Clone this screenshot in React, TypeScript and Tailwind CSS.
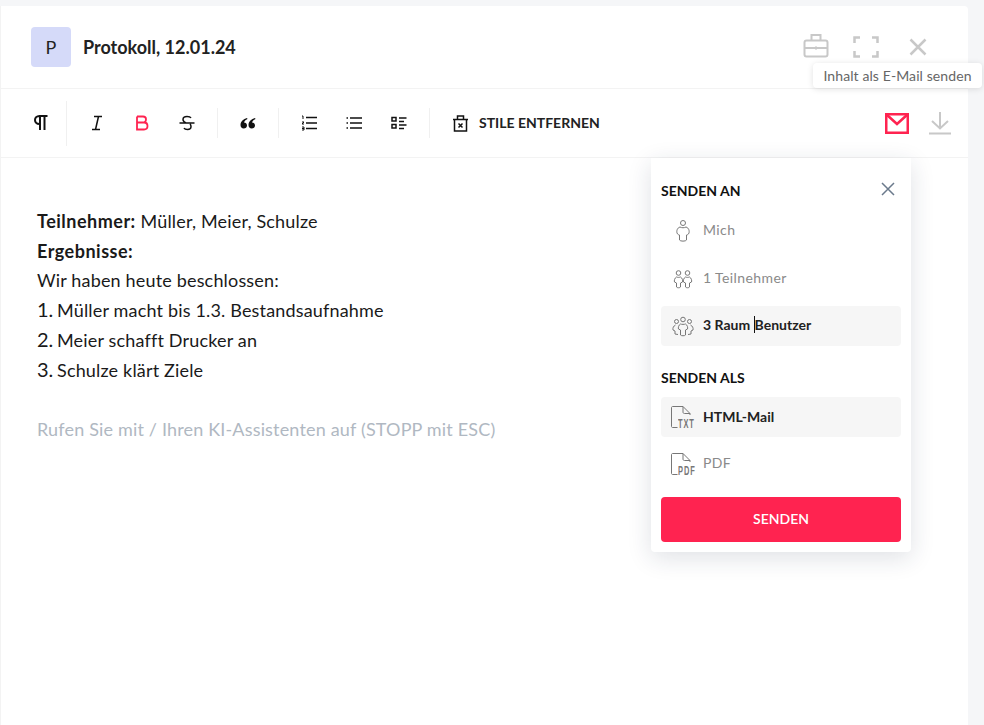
import { FC, ReactNode } from 'react';

const font = { fontFamily: 'Lato, "Open Sans", sans-serif' };

const Svg: FC<{ size?: number; className?: string; children: ReactNode; w?: number; h?: number }> = ({
  size = 20,
  w,
  h,
  className,
  children,
}) => (
  <svg
    width={w ?? size}
    height={h ?? size}
    viewBox={`0 0 ${w ?? size} ${h ?? size}`}
    fill="none"
    stroke="currentColor"
    className={className}
  >
    {children}
  </svg>
);

const Divider: FC<{ tall?: boolean; className?: string }> = ({ tall, className = '' }) => (
  <div className={`${tall ? 'h-[45px]' : 'h-[30px]'} w-px bg-[#f0f0f0] ${className}`} />
);

const ToolBtn: FC<{ children: ReactNode }> = ({ children }) => (
  <div className="flex w-[45px] items-center justify-center">{children}</div>
);

const PersonIcon: FC = () => (
  <Svg w={18} h={24} className="text-[#777]">
    <circle cx="9" cy="4" r="2.5" />
    <path d="M6 8 C3 9 2.500 12 3 14 C3.500 15.500 5 16 5.500 16 L5.500 21 C6 22.500 12 22.500 12.500 21 L12.500 16 C13 16 14.500 15.500 15 14 C15.500 12 15 9 12 8 C10 9 8 9 6 8 Z" />
  </Svg>
);

const TwoPeopleIcon: FC = () => (
  <Svg w={20} h={20} className="text-[#777]">
    <circle cx="5.500" cy="4" r="2.300" />
    <circle cx="14.500" cy="4" r="2.300" />
    <path d="M3.500 8 C1.500 9 1 12 1.500 13 L3.500 14 L3.500 18 C4 19 7 19 7.500 18 L7.500 14 L9.500 13 C10 12 9.500 9 7.500 8 C6.500 8.500 4.500 8.500 3.500 8 Z" />
    <path d="M12.500 8 C10.500 9 10 12 10.500 13 L12.500 14 L12.500 18 C13 19 16 19 16.500 18 L16.500 14 L18.500 13 C19 12 18.500 9 16.500 8 C15.500 8.500 13.500 8.500 12.500 8 Z" />
  </Svg>
);

const GroupIcon: FC = () => (
  <Svg w={22} h={21} className="text-[#777]">
    <circle cx="11" cy="3.500" r="2.300" />
    <circle cx="4.500" cy="5.500" r="2" />
    <circle cx="17.500" cy="5.500" r="2" />
    <path d="M8.500 8 C6.500 9 6 12 6.500 13 L8.500 14 L8.500 19 C9 20 13 20 13.500 19 L13.500 14 L15.500 13 C16 12 15.500 9 13.500 8 C12.500 8.500 9.500 8.500 8.500 8 Z" />
    <path d="M3.500 9 C1.500 10 0.500 12 1 14 L3 15 L3 18 L6 18.500" />
    <path d="M18.500 9 C20.500 10 21.500 12 21 14 L19 15 L19 18 L16 18.500" />
  </Svg>
);

const FileIcon: FC<{ label: string }> = ({ label }) => (
  <div className="relative h-[23px] w-[24px] text-[#777]">
    <Svg w={20} h={23}>
      <path d="M6.500 21.500 H1.500 C1 21.500 0.500 21 0.500 20.500 V1.500 C0.500 1 1 0.500 1.500 0.500 H12 L19 7.500 V9" />
      <path d="M12 0.500 V6 C12 7 12.500 7.500 13.500 7.500 H19" />
    </Svg>
    <span className="absolute bottom-[-1px] left-[7px] origin-left scale-x-[0.62] text-[12px] leading-[12px] font-bold tracking-[1.5px] text-[#777] [font-family:'Liberation_Sans',sans-serif]">
      {label}
    </span>
  </div>
);

const Option: FC<{ icon: ReactNode; label: string; active?: boolean; caret?: boolean }> = ({
  icon,
  label,
  active,
  caret,
}) => (
  <div className={`flex h-10 items-center rounded ${active ? 'bg-[#f6f6f6]' : ''}`}>
    <div className="flex w-[42px] shrink-0 justify-center pl-[2px]">{icon}</div>
    {caret ? (
      <span className="pb-[3px] text-[14px] font-bold text-[#222]">
        3 Raum <span className="border-l border-[#111]">Benutzer</span>
      </span>
    ) : (
      <span
        className={
          active
            ? 'pb-[2px] text-[14px] font-bold text-[#222]'
            : 'pb-[3px] text-[14px] tracking-[0.4px] text-[#8a8a8a]'
        }
      >
        {label}
      </span>
    )}
  </div>
);

const ListNumber: FC<{ n: number }> = ({ n }) => (
  <span className="inline-block w-[20px] text-[20px] leading-none tracking-normal">{n}.</span>
);

const App: FC = () => {
  return (
    <div className="h-[725px] w-[984px] overflow-hidden bg-[#f5f6f8] pt-[6px]" style={font}>
      <div className="relative h-[719px] w-[968px] rounded-tr border-l border-[#f3f3f3] bg-white text-[#1a1a1a]">
        <header className="flex h-[83px] items-center justify-between border-b border-[#f3f3f3] pr-[41px] pl-[30px]">
          <div className="flex items-center gap-3">
            <div className="flex h-10 w-10 items-center justify-center rounded bg-[#d5daf9] text-lg text-[#222]">P</div>
            <h1 className="text-[18px] font-bold text-[#222]">Protokoll, 12.01.24</h1>
          </div>
          <div className="flex items-center text-[#c8c8c8]">
            <Svg w={26} h={25} className="-mt-[3px] [stroke-width:2]">
              <rect x="1.500" y="7.500" width="23" height="16" rx="2" />
              <path d="M8.500 7 V2 H17.500 V7 M1.500 15 H24.500 M13 13.500 V16.500" />
            </Svg>
            <Svg w={26} h={22} className="ml-[24px] [stroke-width:2.500]">
              <path d="M1.500 7 V1.500 H7 M19 1.500 H24.500 V7 M24.500 15 V20.500 H19 M7 20.500 H1.500 V15" />
            </Svg>
            <Svg w={18} h={18} className="ml-[30px] [stroke-width:2.500]">
              <path d="M1.500 1.500 L16.500 16.500 M16.500 1.500 L1.500 16.500" />
            </Svg>
          </div>
        </header>

        <div className="absolute top-[57px] left-[812px] z-20 flex h-[25px] w-[169px] items-center justify-center rounded bg-white text-[14px] tracking-[0.1px] text-[#666] shadow-[0_1px_6px_rgba(0,0,0,0.12)]">
          Inhalt als E-Mail senden
        </div>

        <div className="flex h-[69px] items-center border-b border-[#f3f3f3] pr-[17px] pl-[32px]">
          <div className="flex w-[33px] justify-start">
            <Svg w={16} h={18} className="text-[#111] [stroke-width:2]">
              <path d="M7 16 V2 M11.500 16 V2 M14.500 2 H6.500 C3.500 2 2 4 2 6 C2 8 3.500 10 6.500 10 H7" />
            </Svg>
          </div>
          <Divider tall />
          <div className="ml-[7px] flex items-center">
            <ToolBtn>
              <Svg w={16} h={16} className="text-[#111] [stroke-width:1.500]">
                <path d="M5 1.500 H13 M3 14.500 H11 M9.500 1.500 L6.500 14.500" />
              </Svg>
            </ToolBtn>
            <ToolBtn>
              <Svg w={16} h={16} className="text-[#ff2350] [stroke-width:1.800]">
                <path d="M3 1.500 H9 C11 1.500 12 2.800 12 4.200 C12 6 11 7.500 9 7.500 H3 M3 7.500 H10 C12.500 7.500 13.500 9 13.500 11 C13.500 13 12 14.500 10 14.500 H3 Z M3 1.500 V14.500" />
              </Svg>
            </ToolBtn>
            <ToolBtn>
              <Svg w={16} h={16} className="text-[#111] [stroke-width:1.500]">
                <path d="M0.500 8 H15.500 M12 3 C11.500 2 10 1.500 8 1.500 C5 1.500 4 3 4 4.500 C4 6 5 7 7 8 M5 13 C5.500 14 7 14.500 8.500 14.500 C11 14.500 12 13 12 11.500 C12 10.500 11.500 9.500 11 9" />
              </Svg>
            </ToolBtn>
          </div>
          <Divider className="ml-[8px]" />
          <div className="ml-[7px]">
            <ToolBtn>
              <Svg w={16} h={12} className="text-[#111]">
                <path
                  fill="currentColor"
                  stroke="none"
                  d="M7 1 C3.500 2 0.500 4.500 0.500 8 C0.500 10 1.800 11.500 3.700 11.500 C5.500 11.500 7 10.200 7 8.500 C7 6.800 5.700 5.500 4 5.500 C4.500 4 5.500 3 7.500 2 Z M15 1 C11.500 2 8.500 4.500 8.500 8 C8.500 10 9.800 11.500 11.700 11.500 C13.500 11.500 15 10.200 15 8.500 C15 6.800 13.700 5.500 12 5.500 C12.500 4 13.500 3 15.500 2 Z"
                />
              </Svg>
            </ToolBtn>
          </div>
          <Divider className="ml-[8px]" />
          <div className="ml-[7px] flex items-center">
            <ToolBtn>
              <Svg w={16} h={16} className="text-[#111] [stroke-width:1.500]">
                <path d="M5 2.500 H16 M5 8 H16 M5 13.500 H16" />
                <path d="M1 1 H2 V4 M1 7 H3 L1 9 H3 M1 12 H3 V15 H1 M1 13.500 H3" strokeWidth="1" />
              </Svg>
            </ToolBtn>
            <ToolBtn>
              <Svg w={16} h={14} className="text-[#111] [stroke-width:1.500]">
                <path d="M4 2 H16 M4 7 H16 M4 12 H16 M0.500 2 H2 M0.500 7 H2 M0.500 12 H2" />
              </Svg>
            </ToolBtn>
            <ToolBtn>
              <Svg w={16} h={14} className="text-[#111] [stroke-width:1.500]">
                <rect x="1" y="1.500" width="4" height="3.500" />
                <rect x="1" y="8.500" width="4" height="3.500" />
                <path d="M8 2 H15.500 M8 5.500 H13 M8 9 H15.500 M8 12.500 H13" />
              </Svg>
            </ToolBtn>
          </div>
          <Divider className="ml-[8px]" />
          <div className="ml-[22px] flex items-center gap-[10px]">
            <Svg w={17} h={17} className="text-[#111] [stroke-width:1.500]">
              <path d="M2.500 4.500 V16 H14.500 V4.500 M1 4.500 H16 M5.500 4.500 V1 H11.500 V4.500" />
              <path d="M6.500 8.500 L10.500 12.500 M10.500 8.500 L6.500 12.500" />
            </Svg>
            <span className="pb-[2px] text-[14px] font-bold text-[#222]">STILE ENTFERNEN</span>
          </div>
          <div className="ml-auto flex items-center gap-[20px]">
            <Svg w={24} h={21} className="text-[#ff2350] [stroke-width:2.500]">
              <rect x="1.250" y="1.250" width="21.500" height="18.500" />
              <path d="M1.500 1.500 L12 11 L22.500 1.500" />
            </Svg>
            <Svg w={22} h={23} className="text-[#c8c8c8] [stroke-width:2]">
              <path d="M11 0 V16 M3 9 L11 16.500 L19 9 M0 21.500 H22" />
            </Svg>
          </div>
        </div>

        <main className="pt-[49px] pl-[36px] text-[18px] leading-[29.7px] tracking-[0.17px] text-[#1a1a1a]">
          <p>
            <strong className="font-bold tracking-[0.5px]">Teilnehmer:</strong> Müller, Meier, Schulze
          </p>
          <p>
            <strong className="font-bold tracking-[0.5px]">Ergebnisse:</strong>
          </p>
          <p>Wir haben heute beschlossen:</p>
          <ol>
            <li>
              <ListNumber n={1} />
              Müller macht bis 1.3. Bestandsaufnahme
            </li>
            <li>
              <ListNumber n={2} />
              Meier schafft Drucker an
            </li>
            <li>
              <ListNumber n={3} />
              Schulze klärt Ziele
            </li>
          </ol>
          <p className="mt-[29.7px] text-[#b0b8c2]">Rufen Sie mit / Ihren KI-Assistenten auf (STOPP mit ESC)</p>
        </main>

        <aside className="absolute top-[152px] left-[650px] z-10 w-[260px] rounded-b bg-white px-[10px] pt-[22px] pb-[10px] shadow-[0_6px_24px_rgba(30,40,70,0.14)]">
          <div className="flex items-center justify-between pr-[6px]">
            <h2 className="text-[14px] font-bold text-[#111]">SENDEN AN</h2>
            <Svg w={14} h={14} className="-mt-[3px] text-[#6b7a8c] [stroke-width:1.500]">
              <path d="M1 1 L13 13 M13 1 L1 13" />
            </Svg>
          </div>
          <div className="mt-[10px] flex flex-col gap-[7.5px]">
            <Option icon={<PersonIcon />} label="Mich" />
            <Option icon={<TwoPeopleIcon />} label="1 Teilnehmer" />
            <Option icon={<GroupIcon />} label="3 Raum Benutzer" active caret />
          </div>
          <h2 className="mt-[21px] text-[14px] font-bold text-[#111]">SENDEN ALS</h2>
          <div className="mt-[9px] flex flex-col gap-[7px]">
            <Option icon={<FileIcon label="TXT" />} label="HTML-Mail" active />
            <Option icon={<FileIcon label="PDF" />} label="PDF" />
          </div>
          <button className="mt-[13px] h-[45px] w-full rounded bg-[#ff2350] pb-[2px] text-[14px] font-semibold text-white">
            SENDEN
          </button>
        </aside>
      </div>
    </div>
  );
};

export default App;
